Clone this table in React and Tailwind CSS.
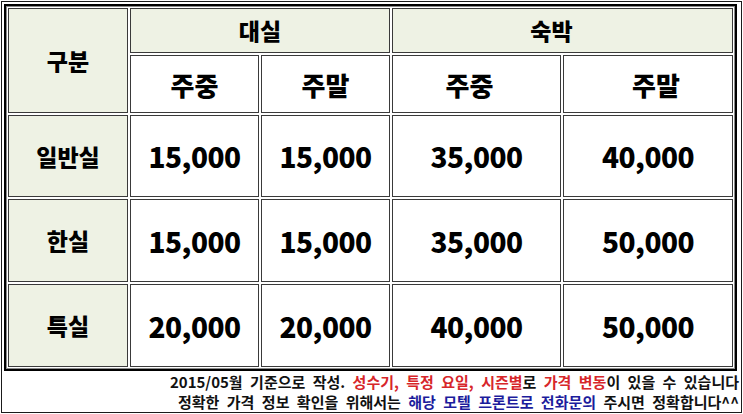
const rows = [
  { name: '일반실', prices: ['15,000', '15,000', '35,000', '40,000'] },
  { name: '한실', prices: ['15,000', '15,000', '35,000', '50,000'] },
  { name: '특실', prices: ['20,000', '20,000', '40,000', '50,000'] },
]

const font = { fontFamily: '"Noto Sans CJK KR", "Noto Sans", sans-serif' }

function Cell({ className = '', children }) {
  return (
    <div className={`flex items-center justify-center border border-[#3a3a3a] text-black font-black ${className}`}>
      {children}
    </div>
  )
}

export default function App() {
  return (
    <div className="w-[743px] h-[414px] p-px bg-white" style={font}>
      <div className="h-full border border-[#1a1a1a] pt-[2px] pl-[2px]">
        {/* price table */}
        <div className="w-[733px] border-2 border-black p-[2px] shadow-[inset_0_0_0_1px_#8a8a8a] bg-white">
          <div className="grid grid-cols-[120px_129px_129px_169px_170px] grid-rows-[45px_58px_82px_83px_83px] gap-[2px]">
            <Cell className="row-span-2 bg-[#eef2e4] text-[23px]">구분</Cell>
            <Cell className="col-span-2 bg-[#eef2e4] text-[23px]">대실</Cell>
            <Cell className="col-span-2 bg-[#eef2e4] text-[23px] pr-[22px]">숙박</Cell>
            <Cell className="bg-white text-[26px]">주중</Cell>
            <Cell className="bg-white text-[26px]">주말</Cell>
            <Cell className="bg-white text-[26px] pr-[14px]">주중</Cell>
            <Cell className="bg-white text-[26px] pl-[16px]">주말</Cell>
            {rows.map((r) => (
              <div key={r.name} className="contents">
                <Cell className="bg-[#eef2e4] text-[23px]">{r.name}</Cell>
                {r.prices.map((p, i) => (
                  <Cell key={i} className="bg-white text-[28px] tracking-[-0.5px]">{p}</Cell>
                ))}
              </div>
            ))}
          </div>
        </div>

        {/* notes */}
        <div className="mt-px pr-[2px] text-right text-[15px] leading-[20px] font-bold text-[#111] [word-spacing:4px]">
          <p>
            2015/05월 기준으로 작성. <span className="text-[#d7262a]">성수기, 특정 요일, 시즌별</span>로{' '}
            <span className="text-[#d7262a]">가격 변동</span>이 있을 수 있습니다
          </p>
          <p>
            정확한 가격 정보 확인을 위해서는 <span className="text-[#1c1c9c]">해당 모텔 프론트로 전화문의</span> 주시면 정확합니다^^
          </p>
        </div>
      </div>
    </div>
  )
}
